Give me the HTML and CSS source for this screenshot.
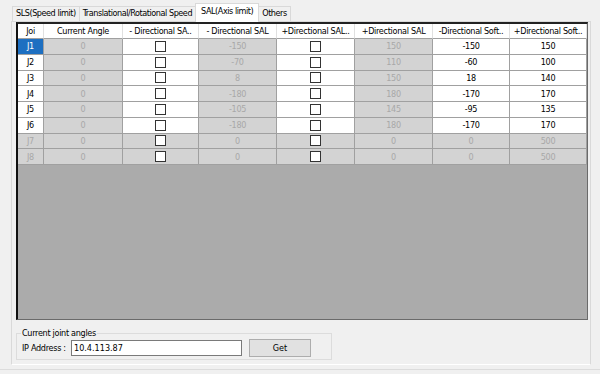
FILE: index.html
```html
<!DOCTYPE html>
<html lang="en">
<head>
  <meta charset="UTF-8">
  <title>SAL(Axis limit)</title>
  <link rel="stylesheet" href="styles.css">
</head>
<body>
  <div class="window">
    <div class="tabs">
      <div class="tab">SLS(Speed limit)</div>
      <div class="tab">Translational/Rotational Speed</div>
      <div class="tab active">SAL(Axis limit)</div>
      <div class="tab">Others</div>
    </div>

    <div class="panel">
      <div class="grid">
        <div class="head">Joi</div>
        <div class="head">Current Angle</div>
        <div class="head">- Directional SA..</div>
        <div class="head">- Directional SAL</div>
        <div class="head">+Directional SAL..</div>
        <div class="head">+Directional SAL</div>
        <div class="head">-Directional Soft..</div>
        <div class="head">+Directional Soft..</div>

        <div class="rowhead selected">J1</div>
        <div class="cell off">0</div>
        <div class="cell"><span class="check"></span></div>
        <div class="cell off">-150</div>
        <div class="cell"><span class="check"></span></div>
        <div class="cell off">150</div>
        <div class="cell">-150</div>
        <div class="cell">150</div>

        <div class="rowhead">J2</div>
        <div class="cell off">0</div>
        <div class="cell"><span class="check"></span></div>
        <div class="cell off">-70</div>
        <div class="cell"><span class="check"></span></div>
        <div class="cell off">110</div>
        <div class="cell">-60</div>
        <div class="cell">100</div>

        <div class="rowhead">J3</div>
        <div class="cell off">0</div>
        <div class="cell"><span class="check"></span></div>
        <div class="cell off">8</div>
        <div class="cell"><span class="check"></span></div>
        <div class="cell off">150</div>
        <div class="cell">18</div>
        <div class="cell">140</div>

        <div class="rowhead">J4</div>
        <div class="cell off">0</div>
        <div class="cell"><span class="check"></span></div>
        <div class="cell off">-180</div>
        <div class="cell"><span class="check"></span></div>
        <div class="cell off">180</div>
        <div class="cell">-170</div>
        <div class="cell">170</div>

        <div class="rowhead">J5</div>
        <div class="cell off">0</div>
        <div class="cell"><span class="check"></span></div>
        <div class="cell off">-105</div>
        <div class="cell"><span class="check"></span></div>
        <div class="cell off">145</div>
        <div class="cell">-95</div>
        <div class="cell">135</div>

        <div class="rowhead">J6</div>
        <div class="cell off">0</div>
        <div class="cell"><span class="check"></span></div>
        <div class="cell off">-180</div>
        <div class="cell"><span class="check"></span></div>
        <div class="cell off">180</div>
        <div class="cell">-170</div>
        <div class="cell">170</div>

        <div class="rowhead off">J7</div>
        <div class="cell off">0</div>
        <div class="cell off"><span class="check"></span></div>
        <div class="cell off">0</div>
        <div class="cell off"><span class="check"></span></div>
        <div class="cell off">0</div>
        <div class="cell off">0</div>
        <div class="cell off">500</div>

        <div class="rowhead off">J8</div>
        <div class="cell off">0</div>
        <div class="cell off"><span class="check"></span></div>
        <div class="cell off">0</div>
        <div class="cell off"><span class="check"></span></div>
        <div class="cell off">0</div>
        <div class="cell off">0</div>
        <div class="cell off">500</div>
      </div>

      <fieldset class="group">
        <legend>Current joint angles</legend>
        <div class="ip-row">
          <label>IP Address :</label>
          <input type="text" value="10.4.113.87">
          <button>Get</button>
        </div>
      </fieldset>
    </div>
  </div>
</body>
</html>
```

FILE: styles.css
```css
body {
  margin: 0;
  background: #f0f0f0;
  font-family: "DejaVu Sans Condensed", "Liberation Sans", sans-serif;
  font-size: 9px;
  letter-spacing: -0.3px;
  color: #000;
}

.window {
  width: 600px;
  height: 369px;
  border-bottom: 1px solid #dcdcdc;
}

.tabs {
  display: flex;
  align-items: flex-end;
  height: 21px;
  padding-left: 12px;
}

.tab {
  height: 14px;
  line-height: 13px;
  padding: 0 3px;
  border: 1px solid #d9d9d9;
  border-bottom: none;
  margin-right: -1px;
  background: #f0f0f0;
  white-space: nowrap;
  letter-spacing: -0.45px;
}

.tab.active {
  height: 18px;
  line-height: 14px;
  margin-bottom: -1px;
  padding: 0 5px;
  background: #fff;
  position: relative;
  z-index: 1;
}

.panel {
  margin-left: 11px;
  width: 580px;
  height: 344px;
  box-sizing: border-box;
  border: 1px solid #d9d9d9;
  border-bottom-color: #fff;
  padding: 0 0 0 4px;
}

.grid {
  width: 572px;
  height: 298px;
  box-sizing: border-box;
  border: 1px solid #6a6a6a;
  border-left: 2px solid #111;
  border-top: 2px solid #222;
  background: #ababab;
  display: grid;
  grid-template-columns: 26px 79px 76px 78px 78px 78px 77px 77px;
  grid-template-rows: 15px repeat(8, 15.75px);
  align-content: start;
}

.head,
.rowhead,
.cell {
  box-sizing: border-box;
  border-right: 1px solid #a0a0a0;
  border-bottom: 1px solid #a0a0a0;
  display: flex;
  align-items: center;
  justify-content: center;
  background: #fff;
  white-space: nowrap;
  overflow: hidden;
}

.head {
  border-color: #e0e0e0;
  border-bottom-color: #a0a0a0;
}

.off {
  background: #d3d3d3;
  color: #a8a8a8;
}

.rowhead.selected {
  background: #1d6fc1;
  color: #fff;
}

.check {
  width: 11px;
  height: 11px;
  box-sizing: border-box;
  border: 1px solid #333;
  background: #fff;
}

.group {
  margin: 8px 0 0 0;
  width: 316px;
  height: 32px;
  box-sizing: border-box;
  border: 1px solid #dcdcdc;
  padding: 0 0 0 5px;
}

.group legend {
  padding: 0 1px;
  margin-left: -1px;
  line-height: 10px;
}

.ip-row {
  display: flex;
  align-items: center;
  margin-top: 1px;
}

.ip-row label {
  width: 49px;
  white-space: nowrap;
}

.ip-row input {
  width: 171px;
  height: 16px;
  box-sizing: border-box;
  border: 1px solid #7a7a7a;
  padding: 0 2px;
  font: inherit;
  outline: none;
}

.ip-row button {
  margin-left: 7px;
  width: 62px;
  height: 18px;
  box-sizing: border-box;
  border: 1px solid #adadad;
  background: #e1e1e1;
  font: inherit;
  padding: 0;
}
```
